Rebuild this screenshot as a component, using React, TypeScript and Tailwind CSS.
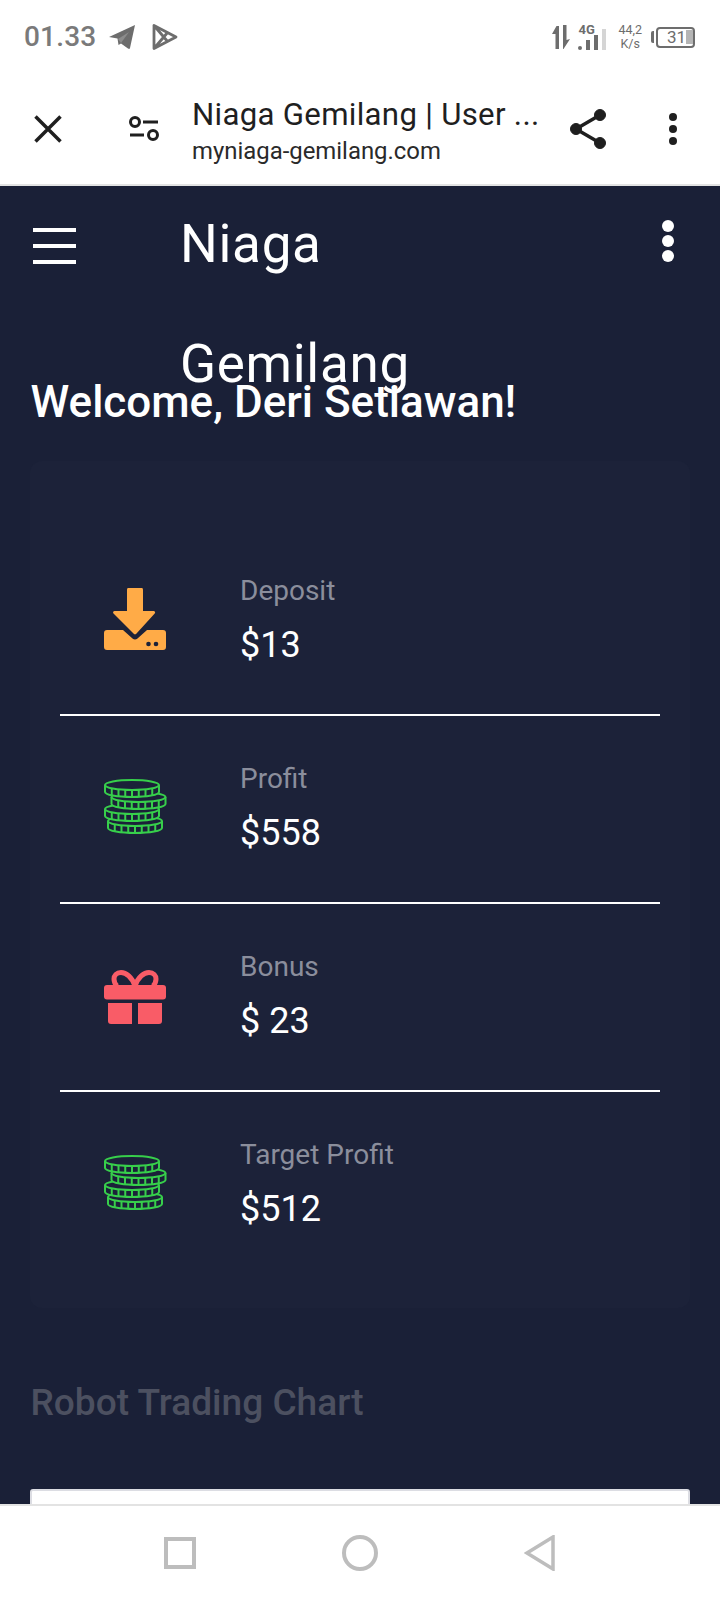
import React from "react";

const Coins = () => {
  const coin = (x: number, cy: number, w: number) => {
    const rx = w / 2;
    const ry = 5;
    const side = 7;
    const ticks = [];
    for (let i = 1; i < 8; i++) {
      const t = i / 8;
      const tx = x + w * t;
      const dy = ry * Math.sqrt(1 - (2 * t - 1) * (2 * t - 1));
      ticks.push(<path key={i} d={`M${tx} ${cy + dy}v${side}`} />);
    }
    return (
      <g key={`${x}-${cy}`}>
        <path
          d={`M${x} ${cy}a${rx} ${ry} 0 0 1 ${w} 0v${side}a${rx} ${ry} 0 0 1 -${w} 0z`}
          fill="#1b2139"
        />
        <path d={`M${x} ${cy}a${rx} ${ry} 0 0 0 ${w} 0`} />
        {ticks}
      </g>
    );
  };
  return (
    <svg viewBox="0 0 63 56" width="63" height="56" fill="none" stroke="#37cf4b" strokeWidth="2" className="-mt-[3px]">
      {coin(4, 43, 54)}
      {coin(1, 31, 54)}
      {coin(7.500, 19, 54)}
      {coin(1, 7, 54)}
    </svg>
  );
};

const Download = () => (
  <svg viewBox="0 0 62 62" width="62" height="62">
    <path
      d="M23 2a2.500 2.500 0 0 1 2.500-2.500h11a2.500 2.500 0 0 1 2.500 2.500v21h10.500a1.500 1.500 0 0 1 1.200 2.500L32.500 45.500a2 2 0 0 1-3 0L9.500 25.500A1.500 1.500 0 0 1 10.700 23H23z"
      fill="#ffab47"
    />
    <path
      d="M3 42h16l9.500 8.500a4 4 0 0 0 5 0L43 42h16a3 3 0 0 1 3 3v14a3 3 0 0 1-3 3H3a3 3 0 0 1-3-3V45a3 3 0 0 1 3-3z"
      fill="#ffab47"
    />
    <circle cx="44.500" cy="56" r="2.300" fill="#1b2139" />
    <circle cx="52" cy="56" r="2.300" fill="#1b2139" />
  </svg>
);

const Gift = () => (
  <svg viewBox="0 0 62 54" width="62" height="54" className="mt-[4px]">
    <path
      d="M31 16C28 7 22 2.500 17 2.500c-4.500 0-7 3-7 6.500 0 3 1.500 5.500 3 7M31 16C34 7 40 2.500 45 2.500c4.500 0 7 3 7 6.500 0 3-1.500 5.500-3 7"
      fill="none"
      stroke="#f95c67"
      strokeWidth="5"
    />
    <rect x="0" y="15" width="62" height="14.500" rx="3" fill="#f95c67" />
    <path d="M4 33h24v21H7a3 3 0 0 1-3-3z" fill="#f95c67" />
    <path d="M34 33h24v18a3 3 0 0 1-3 3H34z" fill="#f95c67" />
  </svg>
);

const Row = ({
  icon,
  label,
  value,
  divider,
}: {
  icon: React.ReactNode;
  label: string;
  value: string;
  divider?: boolean;
}) => (
  <div className={`flex h-[188px] items-center border-b-2 pb-[4px] ${divider ? "border-white" : "border-transparent"}`}>
    <div className="flex w-[180px] shrink-0 pl-[44px]">{icon}</div>
    <div className="mt-[2px] flex flex-col">
      <div className="text-[28px] leading-[34px] text-[#8b8e9c]">{label}</div>
      <div className="mt-[15px] text-[36px] leading-[44px] text-white">{value}</div>
    </div>
  </div>
);

export default function App() {
  return (
    <div className="flex h-[1600px] w-[720px] flex-col overflow-hidden bg-[#1a2037] font-['Roboto',sans-serif]">
      <div className="flex h-[74px] shrink-0 items-center justify-between bg-white pl-[24px] pr-[25px]">
        <div className="flex items-center">
          <span className="text-[28px] font-medium leading-none tracking-[0.2px] text-[#7a7a7a]">01.33</span>
          <svg className="ml-[12px]" viewBox="0 0 28 26" width="28" height="26">
            <path d="M1 13 27 1l-5 23q-.5 1.500-2 .5l-7-5-2.500 1.500-1-6.500z" fill="#6d6d6d" />
            <path d="M10 15 21 8 13 19z" fill="#8c8c8c" />
          </svg>
          <svg className="ml-[16px]" viewBox="0 0 26 28" width="26" height="28" fill="none" stroke="#6d6d6d" strokeWidth="2.800" strokeLinejoin="round">
            <path d="M2 2.500v23l22-11.500zM2 2.500 16 19M2 25.500 16 9" />
          </svg>
        </div>
        <div className="flex items-center">
          <svg viewBox="0 0 18 24" width="18" height="24" fill="#6d6d6d">
            <path d="M4.500 1 0 9h3.500v15h3.500V1zM11 0h3.500v15l3.500-1-6.500 10H11z" />
          </svg>
          <div className="ml-[8px] flex items-end gap-[4px]">
            <div className="flex w-[20px] flex-col items-start">
              <span className="text-[13px] font-bold leading-[10px] text-[#6d6d6d]">4G</span>
              <div className="flex h-[15px] items-end gap-[4px]">
                <div className="h-[4px] w-[4px] rounded-full bg-[#6d6d6d]" />
                <div className="h-[10px] w-[4px] bg-[#6d6d6d]" />
                <div className="h-[15px] w-[4px] bg-[#6d6d6d]" />
              </div>
            </div>
            <div className="h-[21px] w-[4px] bg-[#d5d5d5]" />
          </div>
          <div className="ml-[12px] flex flex-col items-center text-[12.500px] leading-[14px] text-[#6d6d6d]">
            <span>44,2</span>
            <span>K/s</span>
          </div>
          <div className="ml-[9px] h-[12px] w-[3px] rounded-l-[2px] bg-[#6d6d6d]" />
          <div className="ml-[2px] flex h-[21px] w-[39px] items-center rounded-[4px] border-2 border-[#6d6d6d] pl-[9px]">
            <span className="text-[17px] leading-none text-[#6d6d6d]">31</span>
            <div className="h-[14px] w-[9px] bg-[#b5b5b5]" />
          </div>
        </div>
      </div>

      <div className="flex h-[112px] shrink-0 items-center border-b-2 border-[#e3e3e3] bg-white">
        <svg className="ml-[34px]" viewBox="0 0 28 28" width="28" height="28" fill="none" stroke="#1f1f1f" strokeWidth="3.500">
          <path d="M1.500 1.500 26.500 26.500M26.500 1.500 1.500 26.500" />
        </svg>
        <svg className="ml-[67px]" viewBox="0 0 30 26" width="30" height="26" fill="none" stroke="#1f1f1f" strokeWidth="3">
          <circle cx="6" cy="6" r="4.500" />
          <circle cx="24" cy="19" r="4.500" />
          <path d="M14 6h15M1 19h14" />
        </svg>
        <div className="ml-[33px] flex w-[363px] flex-col pt-[4px]">
          <span className="text-[31.200px] leading-[39px] tracking-[0.3px] text-[#1f1f1f]">Niaga Gemilang | User ...</span>
          <span className="mt-[2px] text-[23.900px] leading-[31px] text-[#2a2a2a]">myniaga-gemilang.com</span>
        </div>
        <svg className="ml-[15px]" viewBox="0 0 38 40" width="38" height="40" fill="#1f1f1f" stroke="#1f1f1f">
          <circle cx="6" cy="20" r="5.500" />
          <circle cx="30" cy="6" r="5.500" />
          <circle cx="30" cy="34" r="5.500" />
          <path d="M6 20 30 6M6 20l24 14" strokeWidth="3.500" />
        </svg>
        <div className="ml-[61px] flex flex-col gap-[4px]">
          <div className="h-[8px] w-[8px] rounded-full bg-[#1f1f1f]" />
          <div className="h-[8px] w-[8px] rounded-full bg-[#1f1f1f]" />
          <div className="h-[8px] w-[8px] rounded-full bg-[#1f1f1f]" />
        </div>
      </div>

      <div className="min-h-0 flex-1 overflow-hidden">
        <div className="relative flex h-[192px]">
          <div className="ml-[33px] mt-[42px] flex h-[36px] w-[43px] flex-col justify-between">
            <div className="h-[4px] bg-white" />
            <div className="h-[4px] bg-white" />
            <div className="h-[4px] bg-white" />
          </div>
          <div className="-mt-[2px] ml-[104px] w-[300px] text-[53px] font-normal leading-[120px] tracking-[0.7px] text-white">
            Niaga Gemilang
          </div>
          <div className="absolute right-[46px] top-[34px] flex flex-col gap-[3px]">
            <div className="h-[12px] w-[12px] rounded-full bg-white" />
            <div className="h-[12px] w-[12px] rounded-full bg-white" />
            <div className="h-[12px] w-[12px] rounded-full bg-white" />
          </div>
        </div>
        <h1 className="relative ml-[30.500px] text-[44px] font-medium leading-[48px] text-white">Welcome, Deri Setiawan!</h1>
        <div className="mx-[30px] mt-[35px] rounded-[12px] bg-[#1c2239] px-[30px] pb-[28px] pt-[67px]">
          <Row icon={<Download />} label="Deposit" value="$13" divider />
          <Row icon={<Coins />} label="Profit" value="$558" divider />
          <Row icon={<Gift />} label="Bonus" value="$ 23" divider />
          <Row icon={<Coins />} label="Target Profit" value="$512" />
        </div>
        <h2 className="ml-[30.500px] mt-[72px] text-[37.100px] font-medium leading-[46px] text-[#4c5060]">Robot Trading Chart</h2>
        <div className="mx-[30px] mt-[63px] h-[40px] rounded-t-[3px] border-2 border-[#dcdde3] bg-white" />
      </div>

      <div className="flex h-[96px] shrink-0 items-center border-t-2 border-[#e3e3e3] bg-white">
        <div className="ml-[164px] h-[32px] w-[32px] border-[4px] border-[#bdbdbd]" />
        <div className="ml-[146px] h-[36px] w-[36px] rounded-full border-[4px] border-[#bdbdbd]" />
        <svg className="ml-[146px]" viewBox="0 0 32 36" width="32" height="36" fill="none" stroke="#bdbdbd" strokeWidth="3.500">
          <path d="M29 2v32L3 18z" />
        </svg>
      </div>
    </div>
  );
}
